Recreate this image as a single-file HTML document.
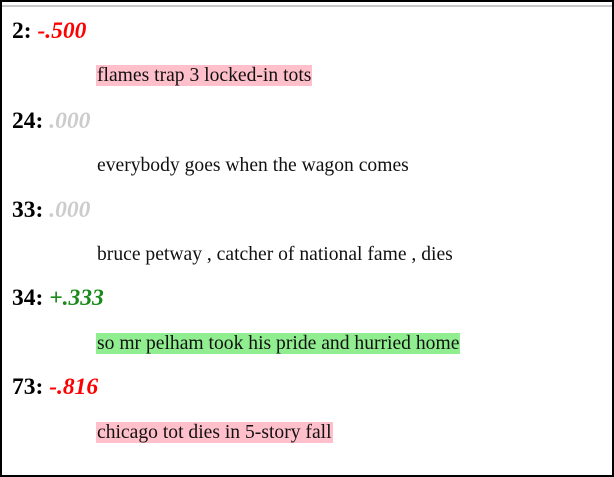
<!DOCTYPE html>
<html><head><style>
html,body{margin:0;padding:0;}
body{width:614px;height:477px;position:relative;background:#fff;font-family:"Liberation Serif",serif;overflow:hidden;}
.frame{position:absolute;left:0;top:0;width:610px;height:473px;border:2px solid #000;}
.gl{position:absolute;left:2px;right:2px;top:5px;height:2px;background:#c8c8c8;}
.h{position:absolute;left:12px;font-size:23.5px;font-weight:bold;color:#000;line-height:24px;}
.h i{font-style:italic;}
.t{position:absolute;left:96px;font-size:19.6px;line-height:21px;padding:0 1px;color:#111;}
.neg{color:#f00}.zero{color:#ccc}.pos{color:#1a8a1a}
</style></head><body>
<div class="frame"></div><div class="gl"></div>
<div class="h" style="top:19px">2: <i class="neg">-.500</i></div>
<div class="t" style="top:65px;background:#ffc0cb">flames trap 3 locked-in tots</div>
<div class="h" style="top:109px">24: <i class="zero">.000</i></div>
<div class="t" style="top:155px">everybody goes when the wagon comes</div>
<div class="h" style="top:198px">33: <i class="zero">.000</i></div>
<div class="t" style="top:244px">bruce petway , catcher of national fame , dies</div>
<div class="h" style="top:286px">34: <i class="pos">+.333</i></div>
<div class="t" style="top:333px;background:#90ee90">so mr pelham took his pride and hurried home</div>
<div class="h" style="top:375px">73: <i class="neg">-.816</i></div>
<div class="t" style="top:422px;background:#ffc0cb">chicago tot dies in 5-story fall</div>
</body></html>
